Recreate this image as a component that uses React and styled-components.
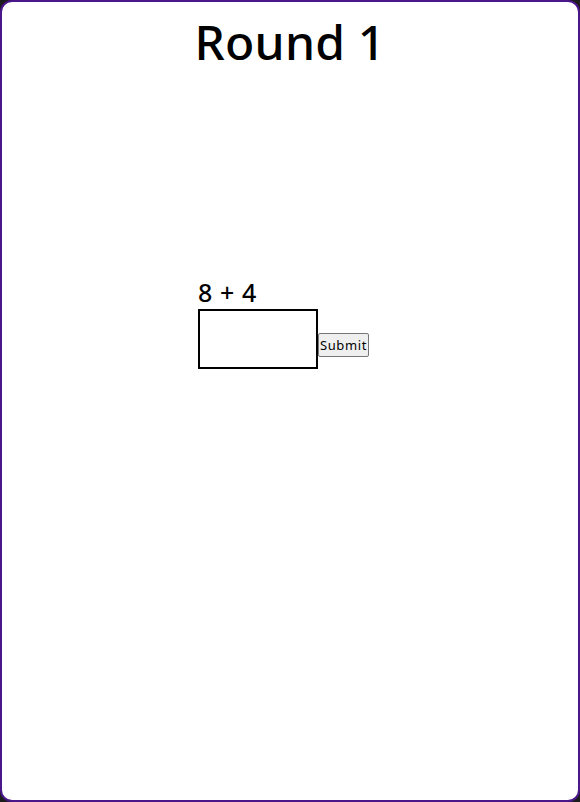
import React from "react";
import styled, { createGlobalStyle } from "styled-components";

const Global = createGlobalStyle`
  html, body { margin: 0; padding: 0; background: #1c1c1c; }
  body { font-family: "Noto Sans", "Inter", sans-serif; }
`;

const Card = styled.div`
  box-sizing: border-box;
  width: 580px;
  height: 802px;
  background: #fff;
  border: 2px solid #4b1689;
  border-radius: 12px;
  display: flex;
  flex-direction: column;
`;

const Title = styled.h1`
  margin: 0;
  padding-top: 8px;
  text-align: center;
  font-family: "Noto Sans", sans-serif;
  font-weight: 500;
  font-size: 48px;
  line-height: 64px;
  color: #000;
  letter-spacing: 0.2px;
`;

const Game = styled.div`
  padding-left: 196px;
  padding-top: 202px;
  display: flex;
  flex-direction: column;
`;

const Question = styled.div`
  font-family: "Noto Sans", sans-serif;
  font-weight: 500;
  font-size: 25px;
  line-height: 32px;
  color: #000;
  letter-spacing: 0.6px;
`;

const Row = styled.form`
  display: flex;
  align-items: flex-end;
  margin: 0;
  margin-top: 1px;
`;

const Answer = styled.input`
  box-sizing: border-box;
  width: 120px;
  height: 60px;
  border: 2px solid #000;
  margin: 0;
  padding: 0 6px;
  font-size: 20px;
  outline: none;
`;

const Submit = styled.button`
  font-family: "Noto Sans", sans-serif;
  font-size: 13px;
  letter-spacing: 0.6px;
  height: 24px;
  padding: 0 1px;
  margin: 0 0 12px 0;
  background: #efefef;
  border: 1px solid #767676;
  border-radius: 2px;
  color: #000;
`;

export default function App() {
  return (
    <>
      <Global />
      <Card>
        <Title>Round 1</Title>
        <Game>
          <Question>8 + 4</Question>
          <Row onSubmit={(e) => e.preventDefault()}>
            <Answer type="text" />
            <Submit type="submit">Submit</Submit>
          </Row>
        </Game>
      </Card>
    </>
  );
}
